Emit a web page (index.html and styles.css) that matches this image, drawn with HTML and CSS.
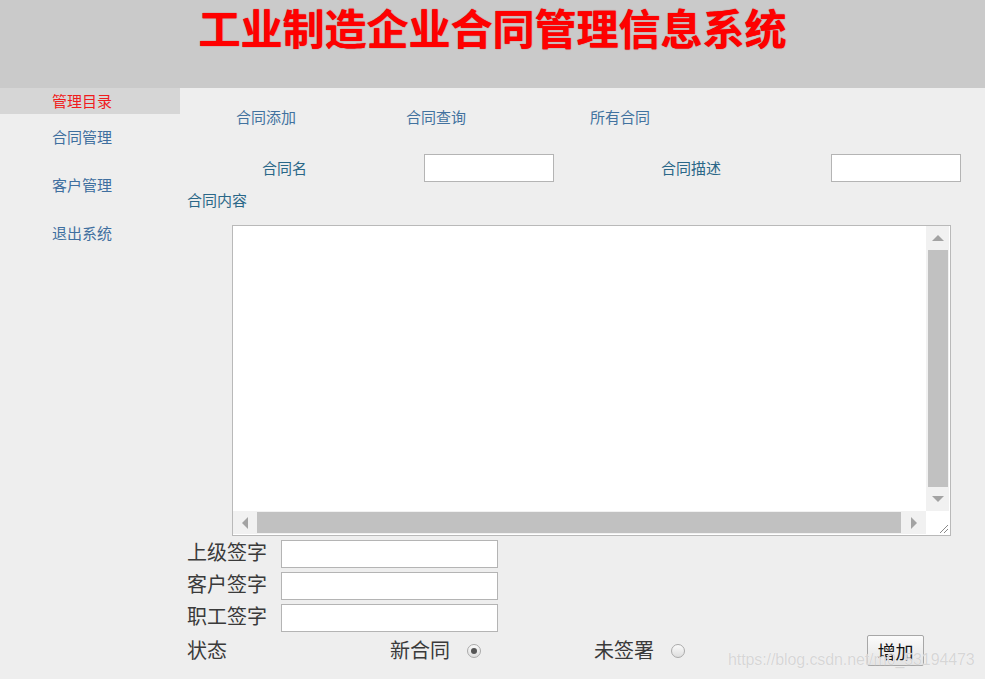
FILE: index.html
```html
<!DOCTYPE html>
<html lang="zh-CN">
<head>
<meta charset="utf-8">
<title>工业制造企业合同管理信息系统</title>
<link rel="stylesheet" href="styles.css">
</head>
<body>
<header class="top">
  <h1 class="title">工业制造企业合同管理信息系统</h1>
</header>
<div class="layout">
  <aside class="side">
    <div class="side-head">管理目录</div>
    <nav class="side-list">
      <a class="side-link" href="#">合同管理</a>
      <a class="side-link" href="#">客户管理</a>
      <a class="side-link" href="#">退出系统</a>
    </nav>
  </aside>
  <main class="main">
    <nav class="tabs">
      <a class="tab" href="#">合同添加</a>
      <a class="tab" href="#">合同查询</a>
      <a class="tab" href="#">所有合同</a>
    </nav>
    <div class="row-names">
      <span class="lbl">合同名</span>
      <input class="box box-sm" type="text">
      <span class="lbl">合同描述</span>
      <input class="box box-sm" type="text">
    </div>
    <div class="lbl content-lbl">合同内容</div>
    <div class="ta">
      <textarea class="ta-input"></textarea>
      <div class="vbar">
        <span class="arr arr-up"></span>
        <span class="vthumb"></span>
        <span class="arr arr-down"></span>
      </div>
      <div class="hbar">
        <span class="arr arr-left"></span>
        <span class="hthumb"></span>
        <span class="arr arr-right"></span>
      </div>
      <div class="corner">
        <svg width="12" height="12" viewBox="0 0 12 12"><path d="M11 3 L3 11 M11 7 L7 11" stroke="#8a8a8a" stroke-width="1" fill="none"/></svg>
      </div>
    </div>
    <div class="signs">
      <div class="sign"><span class="slbl">上级签字</span><input class="box box-lg" type="text"></div>
      <div class="sign"><span class="slbl">客户签字</span><input class="box box-lg" type="text"></div>
      <div class="sign"><span class="slbl">职工签字</span><input class="box box-lg" type="text"></div>
    </div>
    <div class="status">
      <span class="slbl">状态</span>
      <label class="opt opt-1"><span class="slbl">新合同</span><input class="radio" type="radio" name="st" checked></label>
      <label class="opt opt-2"><span class="slbl">未签署</span><input class="radio" type="radio" name="st"></label>
      <button class="btn" type="button">增加</button>
    </div>
    <div class="watermark">https://blog.csdn.net/m0_53194473</div>
  </main>
</div>
</body>
</html>
```

FILE: styles.css
```css
* { box-sizing: border-box; }
html, body { margin: 0; padding: 0; }
body {
  background: #eeeeee;
  font-family: "Noto Sans CJK SC", "Noto Sans", sans-serif;
  width: 985px;
  height: 679px;
  overflow: hidden;
  position: relative;
}
a { text-decoration: none; }

.top {
  height: 88px;
  background: #cacaca;
}
.title {
  margin: 0;
  text-align: center;
  font-size: 42px;
  line-height: 54px;
  font-weight: 700;
  color: #ff0000;
  text-shadow: 0 0 1px #c00000;
}

.layout { display: flex; }
.side { width: 180px; flex: none; }
.side-head {
  height: 26px;
  line-height: 26px;
  background: #d6d6d6;
  color: #f01c1c;
  font-size: 15px;
  padding-left: 52px;
}
.side-list {
  display: flex;
  flex-direction: column;
  gap: 22px;
  margin-top: 10px;
}
.side-link {
  display: block;
  height: 26px;
  line-height: 26px;
  padding-left: 52px;
  font-size: 15px;
  color: #3f6f9f;
}

.main { flex: 1; position: relative; height: 591px; }

.tabs {
  display: grid;
  grid-template-columns: 170px 184px auto;
  padding: 19px 0 0 56px;
  height: 39px;
}
.tab {
  font-size: 15px;
  line-height: 20px;
  color: #42729f;
}

.row-names {
  display: grid;
  grid-template-columns: 162px 237px 170px 131px;
  align-items: center;
  padding-left: 82px;
  margin-top: 27px;
  height: 28px;
}
.lbl {
  font-size: 15px;
  color: #2a6788;
  line-height: 20px;
}
.box {
  height: 28px;
  border: 1px solid #b4b4b4;
  background: #fff;
  padding: 0 4px;
  margin: 0;
  font: inherit;
  outline: none;
}
.box-sm { width: 130px; }
.content-lbl {
  margin: 8px 0 0 7px;
}

.ta {
  margin: 15px 0 0 52px;
  width: 719px;
  height: 311px;
  border: 1px solid #b9b9b9;
  background: #fff;
  display: grid;
  grid-template-columns: 693px 23px;
  grid-template-rows: 285px 23px;
}
.ta-input {
  border: 0;
  resize: none;
  outline: none;
  background: #fff;
  width: 100%;
  height: 100%;
  margin: 0;
  padding: 2px;
}
.vbar {
  background: #f1f1f1;
  display: flex;
  flex-direction: column;
  align-items: center;
}
.vbar .arr { height: 24px; flex: none; }
.vthumb {
  width: 20px;
  height: 237px;
  background: #c1c1c1;
}
.hbar {
  background: #f1f1f1;
  display: flex;
  align-items: center;
}
.hbar .arr { width: 24px; flex: none; height: 100%; }
.hbar .arr-right { width: 25px; }
.hthumb {
  height: 21px;
  width: 644px;
  background: #c1c1c1;
}
.arr {
  display: flex;
  align-items: center;
  justify-content: center;
  width: 100%;
}
.arr::before {
  content: "";
  display: block;
  width: 0;
  height: 0;
}
.arr-up::before {
  border-left: 6px solid transparent;
  border-right: 6px solid transparent;
  border-bottom: 6px solid #a3a3a3;
}
.arr-down::before {
  border-left: 6px solid transparent;
  border-right: 6px solid transparent;
  border-top: 6px solid #a3a3a3;
}
.arr-left::before {
  border-top: 6px solid transparent;
  border-bottom: 6px solid transparent;
  border-right: 6px solid #a3a3a3;
}
.arr-right::before {
  border-top: 6px solid transparent;
  border-bottom: 6px solid transparent;
  border-left: 6px solid #a3a3a3;
}
.corner {
  background: #fff;
  display: flex;
  align-items: flex-end;
  justify-content: flex-end;
}
.corner svg { display: block; }

.signs {
  margin: 4px 0 0 7px;
  display: flex;
  flex-direction: column;
  gap: 4px;
}
.sign {
  display: grid;
  grid-template-columns: 94px 217px;
  align-items: center;
  height: 28px;
}
.sign .slbl { margin-top: -4px; }
.box-lg { width: 217px; }
.slbl {
  font-size: 20px;
  line-height: 26px;
  color: #3a3a3a;
}

.status {
  margin: 3px 0 0 7px;
  height: 31px;
  display: grid;
  grid-template-columns: 203px 204px 273px 57px;
  align-items: center;
}
.status .slbl { margin-top: -2px; }
.opt {
  display: flex;
  align-items: center;
  gap: 17px;
}
.radio {
  -webkit-appearance: none;
  appearance: none;
  width: 14px;
  height: 14px;
  margin: 0;
  border: 1px solid #aaaaaa;
  border-radius: 50%;
  background: linear-gradient(#fafafa, #dedede);
  display: grid;
  place-items: center;
}
.radio:checked::after {
  content: "";
  width: 6px;
  height: 6px;
  border-radius: 50%;
  background: #555;
}
.btn {
  width: 57px;
  height: 31px;
  margin: 0;
  padding: 0;
  border: 1px solid #a7a7a7;
  border-radius: 2px;
  background: linear-gradient(#fbfbfb, #e3e3e3);
  font-family: "Noto Sans CJK SC", sans-serif;
  font-size: 18px;
  color: #111;
}

.watermark {
  position: absolute;
  left: 548px;
  top: 563px;
  font-family: "Liberation Sans", sans-serif;
  font-size: 16px;
  letter-spacing: -0.1px;
  color: #d6d6d6;
  text-shadow: 0 0 1px #ffffff;
  pointer-events: none;
}
```
